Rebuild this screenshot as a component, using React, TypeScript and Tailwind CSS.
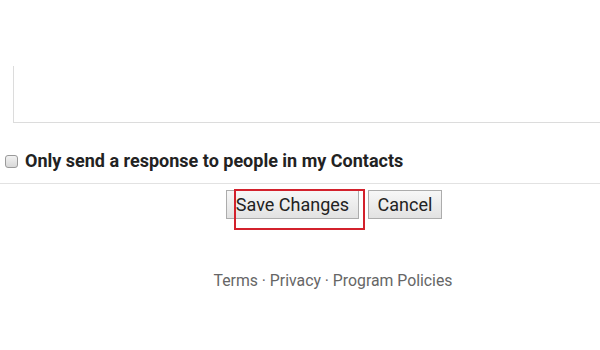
export default function App() {
  return (
    <div className="w-[600px] h-[350px] bg-white overflow-hidden flex flex-col" style={{ fontFamily: 'Roboto, "Liberation Sans", sans-serif' }}>
      <div className="h-[66px] shrink-0" />
      <div className="ml-[13px] h-[57px] border-l border-b border-[#dcdcdc] shrink-0" />
      <div className="flex items-center h-[44px] pl-[5px] mt-[16px] shrink-0">
        <div className="w-[13px] h-[13px] rounded-[3px] border border-[#9a9a9a] bg-gradient-to-b from-[#f2f2f2] to-[#d8d8d8] shrink-0" />
        <span className="ml-[7px] text-[18px] font-bold text-[#222] leading-none">Only send a response to people in my Contacts</span>
      </div>
      <div className="h-px bg-[#e2e2e2] shrink-0" />
      <div className="flex justify-center pl-[68px] pt-[6px] gap-[9px] shrink-0">
        <div className="relative">
          <button className="h-[29px] w-[133px] border border-[#acacac] bg-gradient-to-b from-[#f7f7f7] to-[#e2e2e2] text-[18px] text-[#222] leading-none">Save Changes</button>
          <div className="absolute left-[8px] top-[-1px] w-[131px] h-[41px] border-2 border-[#d3212c] pointer-events-none" />
        </div>
        <button className="h-[29px] w-[74px] border border-[#acacac] bg-gradient-to-b from-[#f7f7f7] to-[#e2e2e2] text-[18px] text-[#222] leading-none">Cancel</button>
      </div>
      <div className="flex justify-center pl-[66px] mt-[54px] text-[15.8px] text-[#666] leading-none">
        Terms · Privacy · Program Policies
      </div>
    </div>
  );
}
